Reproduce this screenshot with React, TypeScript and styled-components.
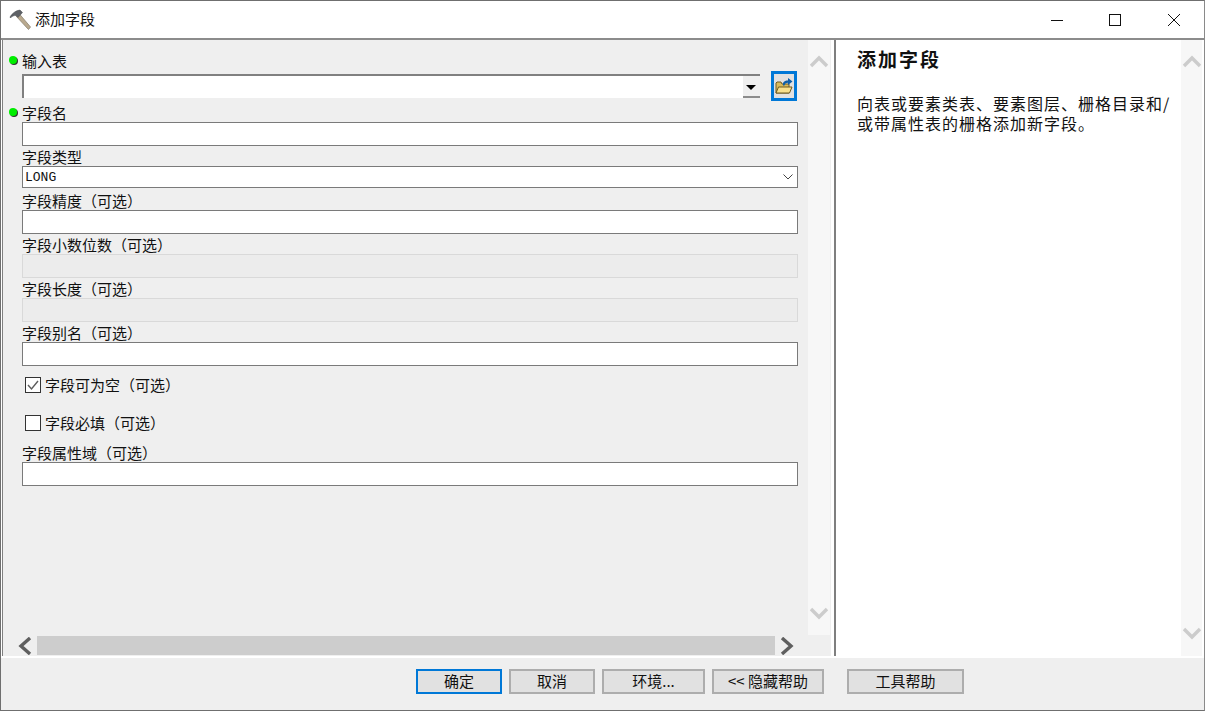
import React from 'react';
import styled, { createGlobalStyle } from 'styled-components';

const GlobalStyle = createGlobalStyle`
  html, body {
    margin: 0;
    padding: 0;
    background: #fff;
  }
  * {
    box-sizing: border-box;
  }
`;

const Chevron: React.FC<{ dir: 'up' | 'down' | 'left' | 'right'; color: string }> = ({ dir, color }) => {
  const points = {
    up: '2,13 10,5 18,13',
    down: '2,3 10,11 18,3',
    left: '12,1 3,9 12,17',
    right: '2,1 11,9 2,17',
  }[dir];
  const vertical = dir === 'up' || dir === 'down';
  return (
    <svg width={vertical ? 20 : 14} height={vertical ? 16 : 18} viewBox={vertical ? '0 0 20 16' : '0 0 14 18'}>
      <polyline points={points} fill="none" stroke={color} strokeWidth="3.4" />
    </svg>
  );
};

const HammerIcon = () => (
  <svg width="22" height="22" viewBox="0 0 22 22">
    <path d="M7 7 L10 4.5 L21.5 18 L19.5 20.5 Z" fill="#b9a98e" stroke="#8d8371" strokeWidth="0.8" />
    <path d="M1 8 C3 4.5 6.5 1.5 11 1 L13.5 3.5 L9 8.5 L7 6.5 C5 6.5 3 7 1.5 9 Z" fill="#5d6065" stroke="#43464a" strokeWidth="0.5" />
  </svg>
);

const FolderIcon = () => (
  <svg width="18" height="18" viewBox="0 0 18 18">
    <path d="M1 6 L1 16 L14 16 L14 7 L7 7 L6 5 L2 5 Z" fill="#d9bb5c" stroke="#6d5a20" strokeWidth="1" />
    <path d="M1 16 L3.5 10 L17 10 L14.5 16 Z" fill="#f8e08c" stroke="#6d5a20" strokeWidth="1" />
    <path d="M8 8.5 L8 6 C9 4 11 3.5 13 3.5 L13 1 L17.5 4.5 L13 8 L13 5.8 C11 5.8 10 6.5 9.5 8.5 Z" fill="#0f5fa8" />
  </svg>
);

const CheckIcon = () => (
  <svg width="14" height="14" viewBox="0 0 14 14">
    <polyline points="2,7 5.5,11 12,3" fill="none" stroke="#5c5c5c" strokeWidth="1.4" />
  </svg>
);

const App: React.FC = () => {
  return (
    <Page>
      <GlobalStyle />
      <TitleBar>
        <TitleIcon>
          <HammerIcon />
        </TitleIcon>
        <TitleText>添加字段</TitleText>
        <WindowControls>
          <WindowButton>
            <svg width="12" height="12" viewBox="0 0 12 12">
              <line x1="0" y1="6.5" x2="12" y2="6.5" stroke="#111" />
            </svg>
          </WindowButton>
          <WindowButton>
            <svg width="12" height="12" viewBox="0 0 12 12">
              <rect x="0.5" y="0.5" width="11" height="11" fill="none" stroke="#111" />
            </svg>
          </WindowButton>
          <WindowButton>
            <svg width="12" height="12" viewBox="0 0 12 12">
              <path d="M0 0 L12 12 M12 0 L0 12" stroke="#111" />
            </svg>
          </WindowButton>
        </WindowControls>
      </TitleBar>

      <Body>
        <LeftPane>
          <ScrollRow>
            <Form>
              <Label>
                <RequiredDot />
                输入表
              </Label>
              <ComboRow>
                <Combo>
                  <ComboArrow />
                </Combo>
                <BrowseButton>
                  <FolderIcon />
                </BrowseButton>
              </ComboRow>

              <Label $gap={1}>
                <RequiredDot />
                字段名
              </Label>
              <Input />

              <Label>字段类型</Label>
              <Select>
                LONG
                <SelectArrow>
                  <svg width="10" height="6" viewBox="0 0 10 6">
                    <polyline points="0.5,0.5 5,5 9.5,0.5" fill="none" stroke="#444" />
                  </svg>
                </SelectArrow>
              </Select>

              <Label $gap={2}>字段精度（可选）</Label>
              <Input />

              <Label>字段小数位数（可选）</Label>
              <Input disabled />

              <Label>字段长度（可选）</Label>
              <Input disabled />

              <Label>字段别名（可选）</Label>
              <Input />

              <CheckRow>
                <CheckBox>
                  <CheckIcon />
                </CheckBox>
                字段可为空（可选）
              </CheckRow>
              <CheckRow>
                <CheckBox />
                字段必填（可选）
              </CheckRow>

              <Label>字段属性域（可选）</Label>
              <Input />
            </Form>
            <VScroll $bottom={13}>
              <Chevron dir="up" color="#cccccc" />
              <Chevron dir="down" color="#cccccc" />
            </VScroll>
          </ScrollRow>
          <HScroll>
            <HArrow>
              <Chevron dir="left" color="#5f5f5f" />
            </HArrow>
            <HTrack />
            <HArrow $right>
              <Chevron dir="right" color="#5f5f5f" />
            </HArrow>
          </HScroll>
        </LeftPane>

        <HelpPane>
          <HelpContent>
            <HelpTitle>添加字段</HelpTitle>
            <HelpText>向表或要素类表、要素图层、栅格目录和/或带属性表的栅格添加新字段。</HelpText>
          </HelpContent>
          <VScroll $bottom={14} $help>
            <Chevron dir="up" color="#cccccc" />
            <Chevron dir="down" color="#cccccc" />
          </VScroll>
        </HelpPane>
      </Body>

      <Footer>
        <FooterButton $width={86} $primary>确定</FooterButton>
        <FooterButton $width={86}>取消</FooterButton>
        <FooterButton $width={103}>环境...</FooterButton>
        <FooterButton $width={112}>&lt;&lt; 隐藏帮助</FooterButton>
        <FooterButton $width={117} $apart>工具帮助</FooterButton>
      </Footer>
    </Page>
  );
};

const Page = styled.div`
  display: flex;
  flex-direction: column;
  width: 1205px;
  height: 711px;
  overflow: hidden;
  border: 1px solid #6f6f6f;
  border-right-color: #8a8a8a;
  background: #fff;
  font-family: "Noto Sans CJK SC", "Liberation Sans", sans-serif;
  font-size: 15px;
  color: #111;
`;

const TitleBar = styled.div`
  display: flex;
  align-items: center;
  flex: none;
  height: 37px;
  padding-left: 8px;
  background: #fff;
`;

const TitleIcon = styled.div`
  display: flex;
  width: 26px;
`;

const TitleText = styled.div`
  padding-bottom: 2px;
  font-size: 15px;
  line-height: 35px;
`;

const WindowControls = styled.div`
  display: flex;
  margin-left: auto;
`;

const WindowButton = styled.div`
  display: flex;
  align-items: center;
  justify-content: center;
  width: 58px;
  height: 37px;

  &:last-child {
    width: 60px;
  }
`;

const Body = styled.div`
  display: flex;
  flex: none;
  height: 619px;
  border-top: 2px solid #8c8c8c;
  background: #fff;
`;

const LeftPane = styled.div`
  display: flex;
  flex-direction: column;
  flex: none;
  width: 829px;
  height: 616px;
  margin-left: 1px;
  border-left: 1px solid #808080;
  background: #efefef;
`;

const ScrollRow = styled.div`
  display: flex;
  flex: 1;
  min-height: 0;
`;

const Form = styled.div`
  display: flex;
  flex-direction: column;
  flex: none;
  width: 805px;
  padding: 10px 10px 0 19px;
`;

const Label = styled.div<{ $gap?: number }>`
  position: relative;
  height: 20px;
  margin-top: ${p => p.$gap ?? 0}px;
  line-height: 22px;
  white-space: nowrap;
`;

const RequiredDot = styled.span`
  position: absolute;
  left: -13px;
  top: 6px;
  width: 8px;
  height: 8px;
  border-radius: 50%;
  background: #00ee00;
  box-shadow: 1px 1px 0 #333;
`;

const ComboRow = styled.div`
  display: flex;
  align-items: center;
  height: 30px;
  margin-top: 1px;
`;

const Combo = styled.div`
  display: flex;
  justify-content: flex-end;
  width: 738px;
  height: 24px;
  border-top: 2px solid #808080;
  border-left: 2px solid #808080;
  background: #fff;
`;

const ComboArrow = styled.div`
  position: relative;
  width: 17px;
  height: 22px;
  background: #efefef;
  border-bottom: 2px solid #8c8c8c;

  &::after {
    content: '';
    position: absolute;
    left: 3px;
    top: 9px;
    border-left: 5px solid transparent;
    border-right: 5px solid transparent;
    border-top: 5px solid #000;
  }
`;

const BrowseButton = styled.div`
  display: flex;
  align-items: center;
  justify-content: center;
  width: 26px;
  height: 30px;
  margin-left: 11px;
  border: 3px solid #0078d7;
  background: #e1e1e1;
`;

const Input = styled.input`
  display: block;
  flex: none;
  width: 776px;
  height: 24px;
  padding: 0;
  border: 1px solid #7a7a7a;
  border-radius: 0;
  background: #fff;
  outline: none;

  &:disabled {
    border-color: #d9d9d9;
    background: #ececec;
  }
`;

const Select = styled.div`
  display: flex;
  align-items: center;
  flex: none;
  width: 776px;
  height: 22px;
  padding-left: 2px;
  border: 1px solid #7a7a7a;
  background: #fff;
  font-family: "Liberation Mono", monospace;
  font-size: 13px;
`;

const SelectArrow = styled.div`
  display: flex;
  margin-left: auto;
  margin-right: 4px;
`;

const CheckRow = styled.div`
  display: flex;
  align-items: center;
  gap: 4px;
  height: 38px;
  padding: 0 0 0 3px;
  white-space: nowrap;
  line-height: 36px;
`;

const CheckBox = styled.div`
  display: flex;
  align-items: center;
  justify-content: center;
  width: 16px;
  height: 16px;
  border: 1px solid #333;
  background: #fff;
`;

const VScroll = styled.div<{ $bottom: number; $help?: boolean }>`
  display: flex;
  flex-direction: column;
  align-items: center;
  justify-content: space-between;
  flex: none;
  width: ${p => (p.$help ? 21 : 22)}px;
  padding: 13px 0 ${p => p.$bottom}px;
  background: #f7f7f7;
`;

const HScroll = styled.div`
  display: flex;
  align-items: center;
  flex: none;
  height: 19px;
  margin: 1px 0;
`;

const HArrow = styled.div<{ $right?: boolean }>`
  display: flex;
  justify-content: ${p => (p.$right ? 'flex-start' : 'flex-end')};
  flex: none;
  width: ${p => (p.$right ? 'auto' : '34px')};
  padding: ${p => (p.$right ? '0 0 0 5px' : '0 5px 0 0')};
`;

const HTrack = styled.div`
  flex: none;
  width: 738px;
  height: 19px;
  background: #cdcdcd;
`;

const HelpPane = styled.div`
  display: flex;
  flex: none;
  width: 369px;
  height: 616px;
  margin-left: 3px;
  border-left: 2px solid #7f7f7f;
`;

const HelpContent = styled.div`
  flex: none;
  width: 345px;
  padding: 6px 0 0 21px;
  background: #fff;
`;

const HelpTitle = styled.div`
  margin-bottom: 21px;
  font-size: 19px;
  font-weight: 700;
  letter-spacing: 2px;
  line-height: 26px;
`;

const HelpText = styled.div`
  width: 316px;
  font-size: 16px;
  letter-spacing: 1px;
  line-height: 20px;
`;

const Footer = styled.div`
  display: flex;
  align-items: flex-start;
  gap: 7px;
  flex: 1;
  padding: 11px 0 0 415px;
  border-top: 1px solid #fff;
  background: #efefef;
`;

const FooterButton = styled.button<{ $width: number; $primary?: boolean; $apart?: boolean }>`
  flex: none;
  width: ${p => p.$width}px;
  height: 25px;
  margin-left: ${p => (p.$apart ? 16 : 0)}px;
  padding: 0 0 2px;
  border: ${p => (p.$primary ? '2px solid #0078d7' : '2px solid #adadad')};
  border-radius: 0;
  background: #e1e1e1;
  color: #111;
  font-family: inherit;
  font-size: 15px;
  line-height: 19px;
`;

export default App;
